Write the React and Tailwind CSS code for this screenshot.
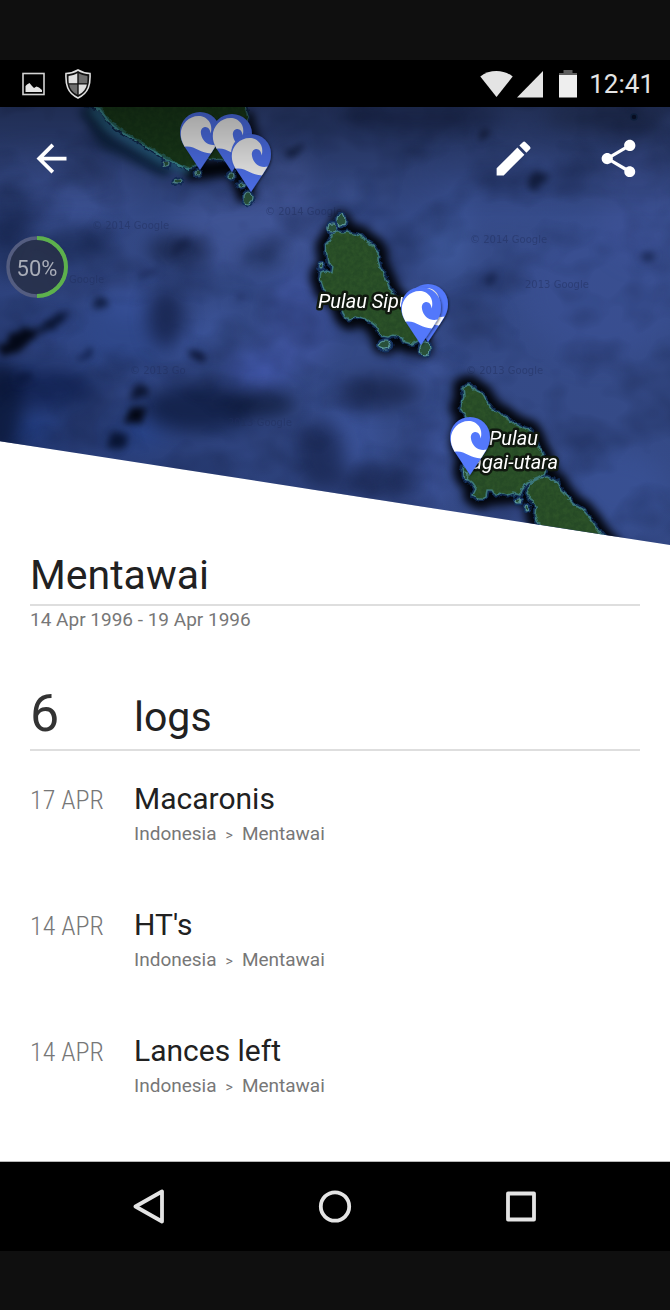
import React from "react";

const LOGS = [
  { date: "17 APR", spot: "Macaronis" },
  { date: "14 APR", spot: "HT's" },
  { date: "14 APR", spot: "Lances left" },
];

const ISLANDS = [
  // Siberut
  "M85 105 L100 108 L110 122 L121 131 L133 138 L145 146 L157 152 L166 159 L177 163 L186 168 L192 167 L207 158 L227 160 L243 158 L246 144 L243 130 L248 117 L244 105 Z",
  // Sipura
  "M332 235 L337 231 L343 233 L348 232 L353 234 L361 236 L367 242 L374 246 L378 252 L378 260 L380 268 L385 277 L390 290 L397 299 L403 310 L413 325 L420 340 L412 344 L405 342 L403 337 L397 336 L393 335 L388 337 L383 336 L378 332 L376 326 L372 323 L366 319 L360 317 L354 316 L350 320 L346 318 L343 313 L340 303 L335 299 L328 295 L324 290 L322 283 L320 278 L321 273 L326 271 L332 273 L333 267 L328 262 L327 255 L326 245 L330 241 Z",
  // North Pagai
  "M463 387 L468 385 L472 386 L477 391 L482 393 L486 401 L493 410 L503 415 L513 423 L521 427 L530 430 L535 438 L538 447 L543 456 L547 467 L544 475 L538 478 L527 483 L522 489 L520 495 L513 493 L507 495 L500 493 L496 496 L492 490 L487 490 L486 496 L483 499 L478 499 L473 495 L476 489 L472 483 L465 477 L463 468 L467 460 L462 450 L460 440 L467 417 L460 408 L464 397 Z",
  // South Pagai
  "M530 483 L538 479 L547 477 L553 480 L558 483 L561 491 L567 497 L573 504 L583 510 L592 521 L600 533 L620 556 L560 556 L538 523 L535 515 L536 507 L527 493 Z",
];

const ISLETS = [
  [341, 220, 4, 6], [332, 228, 4, 4], [385, 345, 6, 4], [425, 349, 5, 7], [321, 266, 2, 3],
  [166, 164, 3, 3], [178, 181, 4, 2], [198, 173, 3, 2], [231, 176, 3, 3], [241, 185, 3, 2],
  [248, 198, 4, 6], [466, 475, 2, 4], [518, 501, 3, 2], [527, 508, 2, 3],
];

// Lighter and darker patches of sea floor: x, y, rx, ry, fill, opacity
const SHALLOWS = [
  [50, 190, 90, 40, "#40559a", 0.5], [250, 230, 80, 40, "#465a9c", 0.6],
  [125, 335, 50, 35, "#2f4a90", 0.6], [300, 320, 34, 50, "#4459a8", 0.6],
  [258, 372, 30, 22, "#4359ae", 0.8], [195, 342, 26, 12, "#4560b0", 0.6],
  [217, 318, 14, 9, "#4964b4", 0.7], [128, 302, 26, 10, "#3c56a4", 0.8],
  [55, 328, 16, 8, "#3450a4", 0.8], [140, 432, 26, 16, "#26448f", 0.7],
  [30, 428, 26, 16, "#1f3f8c", 0.6], [350, 440, 34, 40, "#4059a6", 0.5],
  [430, 460, 20, 50, "#425aa6", 0.6], [500, 180, 90, 40, "#384d90", 0.5],
  [450, 245, 20, 30, "#4560a6", 0.6], [600, 290, 80, 70, "#3c5298", 0.5],
  [460, 195, 14, 8, "#4662ac", 0.7], [532, 168, 14, 8, "#4865b4", 0.7],
  [345, 195, 12, 12, "#4e66ac", 0.7], [640, 200, 40, 60, "#40549a", 0.5],
  [620, 490, 50, 40, "#3b559e", 0.5], [290, 180, 22, 34, "#4a5ea2", 0.7],
  [425, 370, 24, 10, "#4a63b0", 0.6], [70, 195, 40, 10, "#465ea4", 0.5],
];

const BASINS = [
  [178, 250, 30, 16, "#141f40", 0.7], [166, 318, 18, 30, "#15224a", 0.8],
  [262, 257, 22, 9, "#17264c", 0.7], [200, 408, 56, 24, "#0c193e", 0.75],
  [262, 404, 34, 14, "#0d1937", 0.75], [45, 388, 50, 20, "#0a1a48", 0.65],
  [0, 410, 22, 50, "#05112e", 0.7], [75, 245, 36, 18, "#16244c", 0.6],
  [378, 392, 42, 16, "#1b2850", 0.85], [320, 455, 24, 34, "#16224a", 0.7],
  [370, 482, 44, 16, "#1a2854", 0.6], [420, 118, 80, 14, "#1c2a55", 0.6],
  [475, 325, 26, 20, "#293b6c", 0.6], [10, 230, 24, 50, "#18264e", 0.6],
  [605, 118, 60, 14, "#27355f", 0.6], [82, 172, 22, 9, "#1f2f5a", 0.6],
];

const TRENCHES = [
  [18, 341, 22, 8, "#010512", 0.95], [50, 324, 14, 7, "#030a1e", 0.8],
  [98, 303, 8, 4, "#081330", 0.8], [199, 356, 7, 6, "#080f2c", 0.9],
  [138, 392, 12, 6, "#040b20", 0.8], [135, 416, 12, 6, "#01040f", 0.95],
  [118, 441, 14, 6, "#030d26", 0.8], [85, 357, 8, 5, "#0a183e", 0.8],
  [22, 378, 8, 4, "#081639", 0.7], [62, 317, 8, 6, "#071230", 0.7],
  [483, 134, 7, 5, "#111b3a", 0.8], [536, 180, 9, 6, "#0f1a39", 0.85],
  [490, 278, 8, 5, "#14214a", 0.8], [648, 257, 8, 5, "#15234c", 0.8],
  [295, 150, 9, 4, "#0d1836", 0.8], [150, 273, 12, 5, "#172450", 0.7],
  [240, 295, 7, 4, "#1b2957", 0.8], [180, 246, 10, 5, "#111b3c", 0.6],
];

const WATERMARKS = [
  [265, 215, "© 2014 Google"], [92, 229, "© 2014 Google"], [69, 283, "Google"],
  [470, 243, "© 2014 Google"], [525, 288, "2013 Google"], [466, 374, "© 2013 Google"],
  [130, 374, "© 2013 Go"], [228, 426, "2013 Google"],
];

function Pin({ x, y }) {
  return (
    <g transform={`translate(${x} ${y})`} filter="url(#pinShadow)">
      <path
        d="M20 58 L4.5 34.5 C1.5 30 0 25 0 20 A20 20 0 0 1 40 20 C40 25 38.5 30 35.5 34.5 Z"
        fill="#5278fb"
      />
      <path
        d="M4.6 34.7 C2 30 0.8 26.5 0.8 22 C0.8 12 9 4 18.5 4 C27 4 33.500 11.500 30.700 21.600 C30.300 17.500 28 14.700 25 14.900 C22 15.200 20.600 18 20.900 21 C21.300 26 24.500 30.500 29 32.200 C31.500 33.200 34 33.200 36.500 32.600 L30.900 41.500 C20 41.200 15 33.300 4.600 34.700 Z"
        fill="#ffffff"
      />
    </g>
  );
}

function Patches({ items, filter, turn }) {
  return (
    <g filter={filter}>
      {items.map(([x, y, rx, ry, fill, o]) => (
        <ellipse
          key={`${x}-${y}`}
          cx={x}
          cy={y}
          rx={rx}
          ry={ry}
          fill={fill}
          opacity={o}
          transform={turn ? `rotate(${turn} ${x} ${y})` : undefined}
        />
      ))}
    </g>
  );
}

function MapView() {
  return (
    <svg
      className="block h-full w-full"
      viewBox="0 107 670 438"
      preserveAspectRatio="xMidYMid slice"
      role="img"
      aria-label="Satellite map of the Mentawai islands"
    >
      <defs>
        <linearGradient id="ocean" x1="0" y1="0.7" x2="1" y2="0.3">
          <stop offset="0" stopColor="#162a60" />
          <stop offset="0.4" stopColor="#334884" />
          <stop offset="1" stopColor="#394f8e" />
        </linearGradient>
        <linearGradient id="scrim" x1="0" y1="0" x2="0" y2="1">
          <stop offset="0" stopColor="#000" stopOpacity="0.38" />
          <stop offset="1" stopColor="#000" stopOpacity="0" />
        </linearGradient>
        <filter id="wide" x="-20%" y="-20%" width="140%" height="140%" colorInterpolationFilters="sRGB">
          <feGaussianBlur stdDeviation="12" />
        </filter>
        <filter id="basin" x="-20%" y="-20%" width="140%" height="140%" colorInterpolationFilters="sRGB">
          <feGaussianBlur stdDeviation="9" />
        </filter>
        <filter id="trench" x="-20%" y="-20%" width="140%" height="140%" colorInterpolationFilters="sRGB">
          <feTurbulence type="fractalNoise" baseFrequency="0.07" numOctaves="2" seed="6" result="n" />
          <feDisplacementMap in="SourceGraphic" in2="n" scale="16" xChannelSelector="R" yChannelSelector="G" result="d" />
          <feGaussianBlur in="d" stdDeviation="3.500" />
        </filter>
        <filter id="halo" x="-30%" y="-30%" width="160%" height="160%" colorInterpolationFilters="sRGB">
          <feGaussianBlur stdDeviation="4" />
        </filter>
        <filter id="coast" x="-5%" y="-5%" width="110%" height="110%" colorInterpolationFilters="sRGB">
          <feTurbulence type="fractalNoise" baseFrequency="0.16" numOctaves="2" seed="3" result="n" />
          <feDisplacementMap in="SourceGraphic" in2="n" scale="5" xChannelSelector="R" yChannelSelector="G" result="d" />
          <feGaussianBlur in="d" stdDeviation="0.500" />
        </filter>
        <filter id="relief" x="0" y="0" width="100%" height="100%" colorInterpolationFilters="sRGB">
          <feTurbulence type="fractalNoise" baseFrequency="0.016 0.02" numOctaves="3" seed="11" />
          <feColorMatrix values="0 0 0 0 0.04  0 0 0 0 0.08  0 0 0 0 0.2  2 0 0 0 -0.85" />
        </filter>
        <filter id="forest" x="0" y="0" width="100%" height="100%" colorInterpolationFilters="sRGB">
          <feTurbulence type="fractalNoise" baseFrequency="0.22" numOctaves="4" seed="4" />
          <feColorMatrix values="0 0 0 0 0.22  0 0 0 0 0.38  0 0 0 0 0.18  2 0 0 0 -0.6" />
        </filter>
        <filter id="pinShadow" x="-20%" y="-20%" width="140%" height="140%">
          <feDropShadow dx="1" dy="1" stdDeviation="1" floodColor="#000" floodOpacity="0.5" />
        </filter>
        <clipPath id="land">
          {ISLANDS.map((d) => (
            <path key={d} d={d} />
          ))}
        </clipPath>
      </defs>

      <rect x="-400" y="107" width="1470" height="438" fill="url(#ocean)" />
      <Patches items={SHALLOWS} filter="url(#wide)" />
      <Patches items={BASINS} filter="url(#basin)" />
      <rect x="0" y="107" width="670" height="438" filter="url(#relief)" opacity="0.35" />
      <Patches items={TRENCHES} filter="url(#trench)" turn={-30} />

      <circle cx="634" cy="117" r="3" fill="#0b1533" stroke="#16305a" strokeWidth="1.500" />

      <g fontFamily='"DejaVu Sans", sans-serif' fontSize="10" fill="#22305f" opacity="0.5">
        {WATERMARKS.map(([x, y, label]) => (
          <text key={`${x}-${y}`} x={x} y={y}>{label}</text>
        ))}
      </g>

      <g filter="url(#halo)" fill="#02050c" stroke="#02050c" strokeWidth="20" strokeLinejoin="round">
        {ISLANDS.slice(1).map((d) => (
          <path key={d} d={d} />
        ))}
        <path d="M185 172 L235 166 L248 200" fill="none" strokeWidth="18" />
        <path d="M248 112 L256 145" fill="none" strokeWidth="8" />
        <path d="M85 107 L108 142 L170 172" fill="none" stroke="#0c2440" strokeWidth="16" opacity="0.8" />
        <ellipse cx="341" cy="222" rx="3" ry="3" strokeWidth="16" />
        <ellipse cx="385" cy="345" rx="4" ry="2" strokeWidth="16" />
        <ellipse cx="424" cy="347" rx="2" ry="3" strokeWidth="14" />
      </g>
      <path
        d="M92 107 L108 126 L160 158 L190 170"
        fill="none"
        stroke="#2a6f8c"
        strokeWidth="10"
        opacity="0.8"
        filter="url(#halo)"
      />

      <g filter="url(#coast)" strokeLinejoin="round">
        {ISLANDS.map((d) => (
          <path key={d} d={d} fill="#17344f" stroke="#10294f" strokeWidth="5" />
        ))}
        {ISLETS.map(([x, y, rx, ry]) => (
          <ellipse key={`${x}-${y}`} cx={x} cy={y} rx={rx} ry={ry} stroke="#14315f" strokeWidth="5" />
        ))}
        {ISLANDS.map((d) => (
          <path key={d} d={d} fill="#264a26" stroke="#3e7a80" strokeWidth="1.600" />
        ))}
        {ISLETS.map(([x, y, rx, ry]) => (
          <ellipse key={`${x}-${y}`} cx={x} cy={y} rx={rx} ry={ry} fill="#29503a" stroke="#5a969a" strokeWidth="1.200" />
        ))}
        <path d="M98 107 L110 122 L133 138 L157 152 L177 164 L190 169" fill="none" stroke="#3f8f96" strokeWidth="3" />
      </g>
      <g clipPath="url(#land)">
        <rect x="60" y="107" width="600" height="438" filter="url(#forest)" opacity="0.45" />
        <path d="M60 100 H260 V175 H60 Z" fill="#04200a" opacity="0.35" />
      </g>

      <g
        fontFamily="Roboto, sans-serif"
        fontSize="20"
        fontStyle="italic"
        fill="#fff"
        stroke="#10180f"
        strokeWidth="5"
        strokeLinejoin="round"
        paintOrder="stroke"
      >
        <text x="318" y="308">Pulau Sipura</text>
        <text x="489" y="445">Pulau</text>
        <text x="558" y="469" textAnchor="end">agai-utara</text>
      </g>

      <Pin x={180} y={112} />
      <Pin x={212} y={114} />
      <Pin x={231} y={134} />
      <Pin x={408} y={284} />
      <Pin x={401} y={287} />
      <Pin x={450} y={417} />

      <rect x="-400" y="107" width="1470" height="110" fill="url(#scrim)" />
    </svg>
  );
}

function ActionButton({ label, children }) {
  return (
    <button type="button" aria-label={label} className="size-[45px] text-white">
      <svg viewBox="0 0 24 24" fill="currentColor" className="size-full">
        {children}
      </svg>
    </button>
  );
}

function StatusBar() {
  return (
    <div className="flex h-[47px] shrink-0 items-center justify-between bg-black pr-4 pl-[22px] text-[#e4e4e4]">
      <div className="flex items-center gap-5">
        <svg className="h-6 w-[23px]" viewBox="0 0 23 24" aria-hidden="true">
          <rect x="1" y="1.500" width="21" height="21" fill="none" stroke="#d4d4d4" strokeWidth="1.600" />
          <path d="M3.500 20 V14 L5 12.500 L7.500 11 L10 14 L12 16 L14.500 14.500 L17 15.500 L20 18 V20 Z" fill="#e4e4e4" />
        </svg>
        <svg className="h-[30px] w-[26px]" viewBox="0 0 26 30" aria-hidden="true">
          <path d="M13 1 C17 3.500 21 4.300 25 4.500 C25.500 15 24 24 13 29 C2 24 0.500 15 1 4.500 C5 4.300 9 3.500 13 1 Z" fill="#111" stroke="#e0e0e0" strokeWidth="1.600" />
          <path d="M12.300 4.300 V14.200 H3.800 C3.500 11.500 3.500 9 3.600 7 C7 6.700 9.800 5.800 12.300 4.300 Z" fill="#e0e0e0" />
          <path d="M13.700 4.300 V14.200 H22.200 C22.500 11.500 22.500 9 22.400 7 C19 6.700 16.200 5.800 13.700 4.300 Z" fill="#6d6d6d" />
          <path d="M12.300 15.600 V25.700 C7.500 23.300 4.900 20 4.100 15.600 Z" fill="#6d6d6d" />
          <path d="M13.700 15.600 V25.700 C18.500 23.300 21.100 20 21.900 15.600 Z" fill="#e0e0e0" />
        </svg>
      </div>
      <div className="flex items-center">
        <svg className="h-7 w-[33px]" viewBox="0 0 33 28" aria-hidden="true">
          <path d="M0.300 6.500 C9.500 -0.800 23.500 -0.800 32.700 6.500 L16.500 27 Z" fill="#e4e4e4" />
        </svg>
        <svg className="ml-1 h-7 w-[26px]" viewBox="0 0 26 28" aria-hidden="true">
          <path d="M0 27.500 L26 1 V27.500 Z" fill="#e4e4e4" />
        </svg>
        <svg className="ml-4 h-7 w-[18px]" viewBox="0 0 18 28" aria-hidden="true">
          <path d="M4.500 0 H13.500 V3 H18 V6 H0 V3 H4.500 Z" fill="#5c5c5c" />
          <rect x="0" y="5" width="18" height="22.500" fill="#eeeeee" />
        </svg>
        <time className="ml-3 pt-px text-[26px] leading-8">12:41</time>
      </div>
    </div>
  );
}

function NavBar() {
  return (
    <nav className="grid h-[90px] shrink-0 grid-cols-3 border-t border-[#b8b8b8] bg-black px-14">
      <button type="button" aria-label="Back" className="flex items-center justify-center">
        <svg className="size-9" viewBox="0 0 36 36" fill="none" stroke="#e4e4e4" strokeWidth="3.800" strokeLinejoin="round">
          <path d="M31 2.500 V32.500 L4.500 17.500 Z" />
        </svg>
      </button>
      <button type="button" aria-label="Home" className="flex items-center justify-center">
        <svg className="size-9" viewBox="0 0 36 36" fill="none" stroke="#e4e4e4" strokeWidth="3.800">
          <circle cx="18" cy="17.500" r="14.200" />
        </svg>
      </button>
      <button type="button" aria-label="Recent apps" className="flex items-center justify-center">
        <svg className="size-9" viewBox="0 0 36 36" fill="none" stroke="#e4e4e4" strokeWidth="3.800" strokeLinejoin="round">
          <rect x="5" y="4.500" width="26" height="26" />
        </svg>
      </button>
    </nav>
  );
}

export default function App() {
  return (
    <div className="flex min-h-screen flex-col bg-[#0f0f0f] pt-[60px] pb-[59px] font-[Roboto,sans-serif]">
      <StatusBar />
      <div className="flex flex-1 flex-col bg-white">
        <header className="relative h-[438px] overflow-hidden [clip-path:polygon(0_0,100%_0,100%_100%,0_76.3%)]">
          <MapView />
          <div className="absolute inset-x-0 top-0 flex items-center justify-between px-[29px] py-[29px]">
            <ActionButton label="Back">
              <path d="M20 11H7.830l5.590-5.590L12 4l-8 8 8 8 1.410-1.410L7.830 13H20v-2z" />
            </ActionButton>
            <div className="flex gap-[60px]">
              <ActionButton label="Edit">
                <path d="M3 17.250V21h3.750L17.810 9.940l-3.750-3.750L3 17.250zM20.710 7.040a1 1 0 0 0 0-1.410l-2.340-2.340a1 1 0 0 0-1.410 0l-1.830 1.830 3.750 3.750 1.830-1.830z" />
              </ActionButton>
              <ActionButton label="Share">
                <path d="M18 16.080c-.76 0-1.440.3-1.960.77L8.910 12.700c.05-.23.09-.46.09-.7s-.04-.47-.09-.7l7.050-4.110c.54.5 1.250.81 2.040.81 1.660 0 3-1.340 3-3s-1.340-3-3-3-3 1.340-3 3c0 .24.04.47.09.7L8.040 9.810C7.500 9.310 6.790 9 6 9c-1.660 0-3 1.340-3 3s1.340 3 3 3c.79 0 1.500-.31 2.040-.81l7.120 4.160c-.05.21-.08.43-.08.65 0 1.610 1.310 2.920 2.920 2.920s2.920-1.310 2.920-2.920-1.310-2.920-2.920-2.920z" />
              </ActionButton>
            </div>
          </div>
          <div className="absolute top-[129px] left-[6px] grid size-[62px] place-items-center">
            <svg className="col-start-1 row-start-1 size-full" viewBox="0 0 62 62" fill="none" aria-hidden="true">
              <circle cx="31" cy="31" r="29" fill="#283048" fillOpacity="0.85" stroke="#545d80" strokeWidth="3.500" />
              <path d="M31 2 A29 29 0 0 1 31 60" stroke="#5db14c" strokeWidth="4" />
            </svg>
            <span className="col-start-1 row-start-1 pt-[3px] text-[22px] leading-7 text-[#a9adb8]">50%</span>
          </div>
        </header>

        <main className="px-[30px] text-[#212121]">
          <h1 className="border-b-2 border-[#dedede] pt-[6px] pb-[5px] text-[41px] leading-[48px]">Mentawai</h1>
          <p className="pt-[2px] text-[19px] leading-6 text-[#777777]">14 Apr 1996 - 19 Apr 1996</p>

          <h2 className="mt-[56px] grid grid-cols-[104px_1fr] items-baseline border-b-2 border-[#dedede] pb-2">
            <span className="text-[52px] leading-[52px] text-[#333333]">6</span>
            <span className="text-[41px] leading-[48px]">logs</span>
          </h2>

          <ul className="pt-[30px]">
            {LOGS.map(({ date, spot }) => (
              <li key={spot} className="grid grid-cols-[104px_1fr] items-baseline pb-[60px]">
                <span className="font-['Roboto_Condensed',Roboto,sans-serif] text-[26px] leading-9 font-light text-[#777777]">
                  {date}
                </span>
                <div>
                  <h3 className="text-[30px] leading-9">{spot}</h3>
                  <p className="flex items-baseline gap-[9px] pt-[5px] text-[19px] leading-6 text-[#777777]">
                    <span>Indonesia</span>
                    <span className="text-[14px]">&gt;</span>
                    <span>Mentawai</span>
                  </p>
                </div>
              </li>
            ))}
          </ul>
        </main>
      </div>
      <NavBar />
    </div>
  );
}
